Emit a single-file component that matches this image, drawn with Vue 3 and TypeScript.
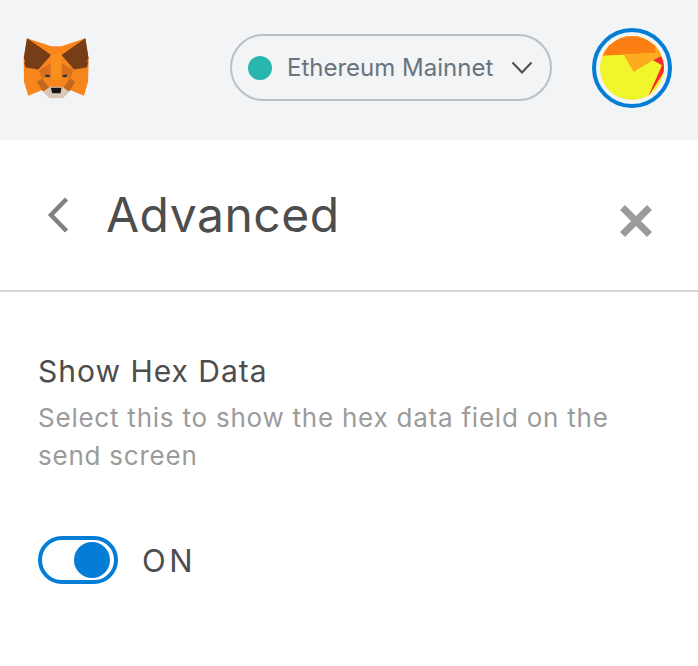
<script setup lang="ts">
import { ref } from 'vue';

const showHexData = ref(true);
</script>

<template>
  <div class="page">
    <header class="app-header">
      <svg class="fox" viewBox="70 80 202 190" width="67" height="63">
        <polygon points="82,84 155,108 186,108 258,84 268,150 266,215 254,257 212,240 188,255 152,255 128,240 86,257 73,215 72,150" fill="#f6851b" />
        <polygon points="82,84 155,134 116,178 78,172 74,160 76,150 72,145 76,120" fill="#763d16" />
        <polygon points="258,84 186,134 224,178 262,172 266,160 264,150 268,145 264,120" fill="#763d16" />
        <polygon points="118,180 153,160 153,198 128,205" fill="#d7711d" />
        <polygon points="222,180 187,160 187,198 212,205" fill="#d7711d" />
        <polygon points="153,132 187,132 183,210 157,210" fill="#f98f1e" />
        <polygon points="112,215 128,205 148,232 130,244" fill="#c0681c" />
        <polygon points="228,215 212,205 192,232 210,244" fill="#c0681c" />
        <polygon points="138,192 152,196 148,202 138,200" fill="#233447" />
        <polygon points="202,192 188,196 192,202 202,200" fill="#233447" />
        <polygon points="130,246 152,230 188,230 210,246 190,265 150,265" fill="#d9c8b5" />
        <polygon points="154,233 186,233 183,250 158,250" fill="#161616" />
      </svg>

      <div class="network-pill">
        <span class="network-dot"></span>
        <span class="network-name">Ethereum Mainnet</span>
        <svg class="network-caret" viewBox="0 0 22 14" width="22" height="14">
          <path d="M1.5 1.5 L11 11.5 L20.5 1.5" fill="none" stroke="#4d4d4d" stroke-width="2" />
        </svg>
      </div>

      <div class="avatar">
        <svg viewBox="89 77 192 192" width="64" height="64">
          <rect x="89" y="77" width="192" height="192" fill="#f1f52c" />
          <polygon points="80,137 160,133 255,128 285,125 285,70 80,70" fill="#fb7f12" />
          <polygon points="160,133 190,185 248,150 274,135 255,108 255,128" fill="#fdaa1f" />
          <polygon points="248,150 272,137 290,170 232,262 275,165" fill="#f82b2b" />
        </svg>
      </div>
    </header>

    <main class="settings">
      <div class="settings-head">
        <svg class="back-icon" viewBox="0 0 22 36" width="22" height="36">
          <path d="M19.5 2 L4 18 L19.5 34" fill="none" stroke="#808080" stroke-width="4.5" />
        </svg>
        <h1 class="settings-title">Advanced</h1>
        <svg class="close-icon" viewBox="0 0 34 34" width="34" height="34">
          <path d="M3.5 3.5 L30.5 30.5 M30.5 3.5 L3.5 30.5" stroke="#9b9b9b" stroke-width="7" />
        </svg>
      </div>

      <section class="setting-row">
        <div class="setting-label">Show Hex Data</div>
        <p class="setting-desc">Select this to show the hex data field on the send screen</p>
        <div class="toggle-row">
          <div class="toggle" :class="{ on: showHexData }" @click="showHexData = !showHexData">
            <span class="toggle-knob"></span>
          </div>
          <span class="toggle-label">{{ showHexData ? 'ON' : 'OFF' }}</span>
        </div>
      </section>
    </main>
  </div>
</template>

<style scoped>
.page {
  width: 698px;
  height: 666px;
  overflow: hidden;
  background: #fff;
  font-family: Inter, "Liberation Sans", sans-serif;
}

.app-header {
  height: 140px;
  box-sizing: border-box;
  background: #f2f4f6;
  display: flex;
  align-items: center;
  padding: 0 26px 4px 23px;
}

.fox {
  flex: none;
}

.network-pill {
  margin-left: auto;
  margin-right: 40px;
  margin-bottom: 1px;
  width: 322px;
  height: 67px;
  box-sizing: border-box;
  border: 2px solid #bbc0c5;
  border-radius: 34px;
  display: flex;
  align-items: center;
  padding: 0 17px 0 16px;
}

.network-dot {
  width: 24px;
  height: 24px;
  border-radius: 50%;
  background: #29b6af;
  flex: none;
}

.network-name {
  margin-left: 15px;
  font-size: 24px;
  color: #6a737d;
  white-space: nowrap;
}

.network-caret {
  margin-left: auto;
  flex: none;
}

.avatar {
  width: 80px;
  height: 80px;
  box-sizing: border-box;
  border: 4px solid #037dd6;
  border-radius: 50%;
  padding: 4px;
  flex: none;
}

.avatar svg {
  display: block;
  border-radius: 50%;
}

.settings-head {
  height: 152px;
  box-sizing: border-box;
  border-bottom: 2px solid #d6d6d6;
  display: flex;
  align-items: center;
  padding: 0 45px 0 47px;
}

.back-icon {
  flex: none;
}

.settings-title {
  margin: 0 0 0 37px;
  font-size: 48px;
  font-weight: 400;
  letter-spacing: 0.5px;
  line-height: 60px;
  color: #4d4d4d;
}

.close-icon {
  margin-left: auto;
  margin-top: 12px;
  flex: none;
}

.setting-row {
  padding: 60px 38px 0;
}

.setting-label {
  font-size: 30px;
  letter-spacing: 1px;
  line-height: 38px;
  color: #4d4d4d;
}

.setting-desc {
  margin: 9px 0 0;
  width: 600px;
  font-size: 26px;
  letter-spacing: 0.77px;
  line-height: 38px;
  color: #9b9b9b;
}

.toggle-row {
  display: flex;
  align-items: center;
  margin-top: 61px;
}

.toggle {
  width: 80px;
  height: 48px;
  box-sizing: border-box;
  border: 4px solid #037dd6;
  border-radius: 24px;
  display: flex;
  align-items: center;
  padding: 0 4px;
  background: #fff;
}

.toggle.on {
  justify-content: flex-end;
}

.toggle-knob {
  width: 36px;
  height: 36px;
  border-radius: 50%;
  background: #037dd6;
}

.toggle-label {
  margin-left: 24px;
  font-size: 31px;
  letter-spacing: 3.5px;
  color: #4d4d4d;
}
</style>
